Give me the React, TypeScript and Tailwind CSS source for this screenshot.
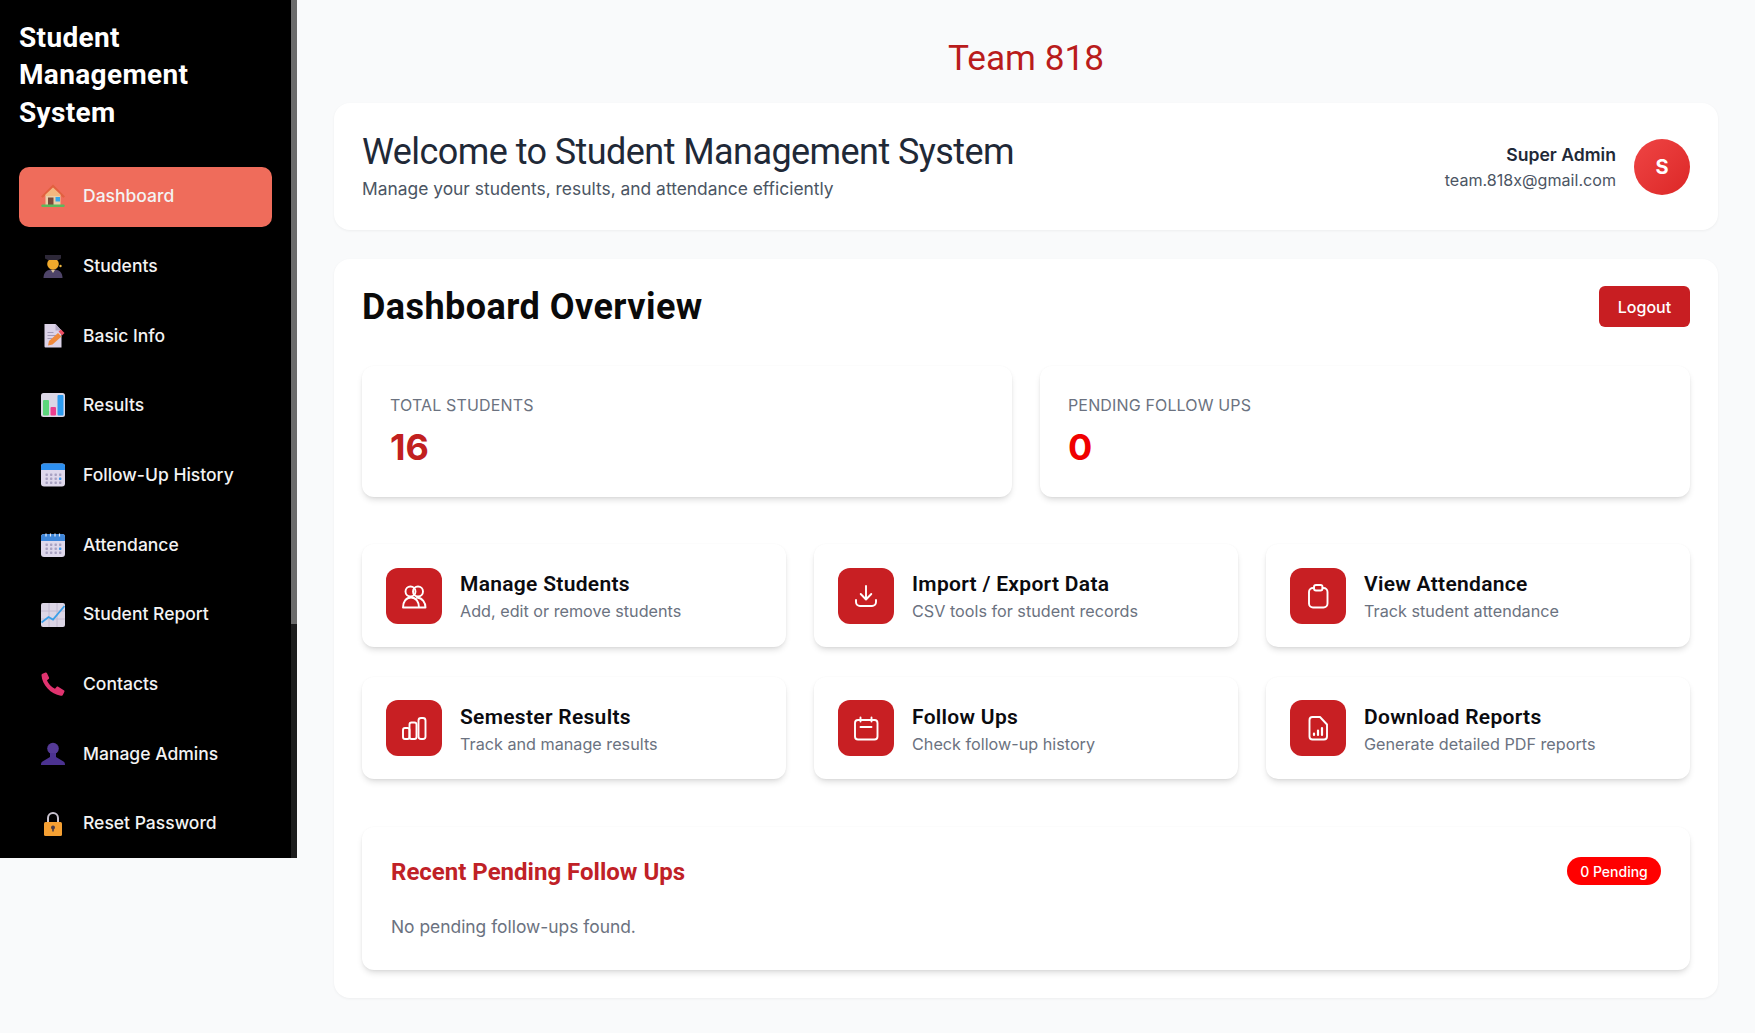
import React from "react";

const heading = "font-['Roboto',sans-serif]";

function DotGrid() {
  const cells: React.ReactNode[] = [];
  [10.5, 14.5, 18.5].forEach((y, r) =>
    [4.5, 9, 13.5, 18].forEach((x, c) =>
      cells.push(<rect key={`${r}-${c}`} x={x} y={y} width="2.400" height="2.400" rx="0.600" fill={r === 1 && c === 3 ? "#3b9bf0" : "#a9a2c2"} />)
    )
  );
  return <>{cells}</>;
}

const emoji: Record<string, React.ReactNode> = {
  house: (
    <>
      <path d="M4.500 10.500h15V21h-15z" fill="#e9cfa8" />
      <path d="M0 12.500 12 .5l12 12-1.800 1.300L12 4 1.800 13.800z" fill="#e2603f" />
      <path d="M12 3.500 4.500 10.500v1.500h15v-1.500z" fill="#f2b880" />
      <path d="M7 13.500h5.500V21.500H7z" fill="#7a4a3a" />
      <path d="M14.500 13h4.500v4.500h-4.500z" fill="#35a6e8" />
      <path d="M1.500 20.500h21a1.200 1.200 0 0 1 0 2.400h-21a1.200 1.200 0 0 1 0-2.400z" fill="#5cb85c" />
    </>
  ),
  student: (
    <>
      <path d="M2.500 24c0-6 3.500-8.500 9.500-8.500s9.500 2.500 9.500 8.500z" fill="#4e4468" />
      <circle cx="12" cy="10" r="5.800" fill="#f0a92c" />
      <path d="M10 16h4l-2 3z" fill="#d9c4a0" />
      <path d="M4 1h16v3.500l-3 1.500H7L4 4.500z" fill="#2d2838" />
      <circle cx="19.500" cy="12" r="1.200" fill="#f0b840" />
    </>
  ),
  memo: (
    <>
      <path d="M3.500 0h11l6 6.500V23.500H4.500a1 1 0 0 1-1-1z" fill="#dcd3e8" />
      <path d="M14.500 0v6.500h6z" fill="#b5abc8" />
      <path d="M6.500 8.500h6M6.500 11.500h9M6.500 14.500h5" stroke="#a49ab8" strokeWidth="1" />
      <path d="m7 21.500 1-4.500 9-8 3.500 3.500-9 8z" fill="#f08a3c" />
      <path d="m17.500 7.500 2.500-2 3.500 3.500-2.500 2.500z" fill="#ee4f63" />
    </>
  ),
  chart: (
    <>
      <rect x="0" y="0" width="24" height="24" rx="2.500" fill="#dcd7e6" />
      <rect x="2" y="7" width="6" height="15.500" rx="1" fill="#5dd67c" />
      <rect x="9.500" y="14" width="5.500" height="8.500" rx="1" fill="#ec3f8e" />
      <rect x="16.500" y="2" width="6" height="20.500" rx="1" fill="#2d9cf0" />
    </>
  ),
  calendar: (
    <>
      <rect x="0" y="0.500" width="24" height="23" rx="3" fill="#dfd9ec" />
      <path d="M0 7V3.500a3 3 0 0 1 3-3h18a3 3 0 0 1 3 3V7z" fill="#2d8ff0" />
      <DotGrid />
    </>
  ),
  spiral: (
    <>
      <rect x="0" y="1" width="24" height="23" rx="3" fill="#dfd9ec" />
      <path d="M0 8V4a3 3 0 0 1 3-3h18a3 3 0 0 1 3 3v4z" fill="#3f87da" />
      <path d="M5 .5v3M9.500 .5v3M14 .5v3M18.500 .5v3" stroke="#e8eefc" strokeWidth="1.200" />
      <DotGrid />
    </>
  ),
  trend: (
    <>
      <rect x="0" y="0" width="24" height="24" rx="2" fill="#dcd6e6" />
      <path d="M8 0v24M16 0v24M0 8h24M0 16h24" stroke="#bdb5cc" strokeWidth="0.800" />
      <path d="m.5 19.500 7-5.500 4.500 2.500L23.500 3" fill="none" stroke="#3a9fe8" strokeWidth="1.800" />
    </>
  ),
  phone: (
    <path d="M1.500 1.800 4.500.500c.7-.3 1.200.1 1.500.7l2 4.300c.3.600.1 1.200-.4 1.600L6 8.300c1.200 3.400 4.600 7 8 8.400l1.500-1.700c.5-.5 1.100-.6 1.700-.3l5.600 3.500c.7.4.9 1.100.5 1.700l-1.500 3c-.4.700-1.100 1-2 .9C10 22.300 1 13 .5 3.300c0-.7.300-1.200 1-1.500z" fill="#e0336f" />
  ),
  bust: (
    <>
      <circle cx="12" cy="6.500" r="5.800" fill="#553a97" />
      <path d="M9 11h6v4l7.500 4.500c1 .6 1.500 1.500 1.500 3.500H0c0-2 .5-2.900 1.500-3.500L9 15z" fill="#4b3290" />
    </>
  ),
  lock: (
    <>
      <path d="M7 11V6a5 5 0 0 1 10 0V11" fill="none" stroke="#c9c3cf" strokeWidth="2" />
      <rect x="3" y="10" width="18" height="14" rx="1.500" fill="#f5a033" />
      <circle cx="12" cy="15.500" r="2" fill="#4a3a48" />
      <path d="M11.200 16h1.600v3.500h-1.600z" fill="#4a3a48" />
    </>
  ),
};

const nav = [
  ["Dashboard", "house"],
  ["Students", "student"],
  ["Basic Info", "memo"],
  ["Results", "chart"],
  ["Follow-Up History", "calendar"],
  ["Attendance", "spiral"],
  ["Student Report", "trend"],
  ["Contacts", "phone"],
  ["Manage Admins", "bust"],
  ["Reset Password", "lock"],
];

const actionIcons: Record<string, React.ReactNode> = {
  students: (
    <>
      <circle cx="24.500" cy="23.500" r="5" />
      <circle cx="32" cy="23.500" r="5" />
      <path d="M17 39.500c0-5.500 3-10 8-10s8 4.500 8 10zM33 39.500h6.500c0-5-3-9.500-8.500-10" />
    </>
  ),
  import: (
    <>
      <path d="M28 18v13M22.700 26l5.300 5.500 5.300-5.500" />
      <path d="M18 32v2a4 4 0 0 0 4 4h12a4 4 0 0 0 4-4v-2" />
    </>
  ),
  attendance: (
    <>
      <path d="M24 20h-1a4 4 0 0 0-4 4v11.500a4 4 0 0 0 4 4h10.500a4 4 0 0 0 4-4V24a4 4 0 0 0-4-4h-1" />
      <rect x="24" y="17" width="8.500" height="5.500" rx="2" />
    </>
  ),
  results: (
    <>
      <rect x="17" y="28" width="6.500" height="11" rx="2" />
      <rect x="23.500" y="22.500" width="7" height="16.500" rx="2" />
      <rect x="32.500" y="18" width="7" height="21" rx="2.500" />
    </>
  ),
  follow: (
    <>
      <rect x="17" y="20" width="22.500" height="19.500" rx="3" />
      <path d="M22.500 17.500v4M33.500 17.500v4M22.500 27h11" />
    </>
  ),
  reports: (
    <>
      <path d="M22.500 17H30l7 7.500V36.500a3 3 0 0 1-3 3H22.500a3 3 0 0 1-3-3V20a3 3 0 0 1 3-3z" />
      <path d="M24 33.500V35M28 30.500V35M32 28V35" strokeWidth="2.200" />
    </>
  ),
};

const row1 = [
  ["Manage Students", "Add, edit or remove students", "students"],
  ["Import / Export Data", "CSV tools for student records", "import"],
  ["View Attendance", "Track student attendance", "attendance"],
];
const row2 = [
  ["Semester Results", "Track and manage results", "results"],
  ["Follow Ups", "Check follow-up history", "follow"],
  ["Download Reports", "Generate detailed PDF reports", "reports"],
];

function ActionCard({ title, sub, icon, h }: { title: string; sub: string; icon: string; h: string }) {
  return (
    <div className={`flex items-center gap-[18px] rounded-xl bg-white pl-6 shadow-[0_4px_6px_-1px_rgba(0,0,0,0.12),0_2px_4px_-2px_rgba(0,0,0,0.08),0_0_2px_rgba(0,0,0,0.03)] ${h}`}>
      <div className="h-14 w-14 shrink-0 rounded-xl bg-[#c81f23]">
        <svg width="56" height="56" viewBox="0 0 56 56" fill="none" stroke="white" strokeWidth="1.900" strokeLinecap="round" strokeLinejoin="round">
          {actionIcons[icon]}
        </svg>
      </div>
      <div className="pt-[3px]">
        <div className={`${heading} text-[21px] leading-[28px] font-semibold tracking-[0.3px] text-[#0b0b0f]`}>{title}</div>
        <div className="text-[16.2px] leading-[26px] text-[#6b7280]">{sub}</div>
      </div>
    </div>
  );
}

export default function App() {
  return (
    <div className="flex min-h-[1033px] items-start bg-[#f9fafb] font-['Inter',sans-serif]">
      <aside className="flex h-[858px] w-[297px] shrink-0 bg-black text-white">
        <div className="w-[291px] shrink-0 pl-[19px]">
          <div className={`${heading} mt-[19px] mb-[36px] w-[220px] text-[28px] leading-[37.300px] font-bold tracking-[0.35px] text-white`}>
            Student Management System
          </div>
          <div className="flex w-[253px] flex-col gap-[9.7px]">
            {nav.map(([label, icon], i) => (
              <div
                key={label}
                className={`flex h-[60px] items-center gap-[18px] rounded-[10px] pb-[1px] pl-[22px] text-[17.5px] font-medium text-[#f3f3f3] ${i === 0 ? "bg-[#ef6c5b]" : ""}`}
              >
                <svg width="24" height="24" viewBox="0 0 24 24" className="shrink-0">
                  {emoji[icon]}
                </svg>
                <span>{label}</span>
              </div>
            ))}
          </div>
        </div>
        <div className="flex-1 bg-[#1c1c1c]">
          <div className="h-[624px] bg-[#6b6b6b]" />
        </div>
      </aside>

      <main className="min-w-0 flex-1 pr-[37px] pl-[37px]">
        <h1 className={`${heading} mt-[38px] mb-[25px] text-center text-[35.200px] leading-[40px] font-normal text-[#b91c1c]`}>Team 818</h1>

        <section className="mb-[29px] flex h-[127px] items-center justify-between rounded-2xl bg-white pr-[28px] pl-7 shadow-[0_1px_3px_rgba(0,0,0,0.05)]">
          <div>
            <div className={`${heading} -mt-[1px] text-[36px] leading-[44px] font-normal tracking-[-0.57px] text-[#1f2937]`}>Welcome to Student Management System</div>
            <div className="pt-[1px] text-[17.4px] leading-[28px] text-[#4b5563]">Manage your students, results, and attendance efficiently</div>
          </div>
          <div className="flex items-center gap-[18px]">
            <div className="text-right">
              <div className="text-[17.6px] leading-[26px] font-semibold text-[#1f2937]">Super Admin</div>
              <div className="text-[16.100px] leading-[24px] text-[#4b5563]">team.818x@gmail.com</div>
            </div>
            <div className="flex h-14 w-14 items-center justify-center rounded-full bg-gradient-to-br from-[#ef4444] to-[#dc2626] text-[20px] font-bold text-white">S</div>
          </div>
        </section>

        <section className="mb-[35px] rounded-2xl bg-white px-7 pt-[27px] pb-7 shadow-[0_1px_3px_rgba(0,0,0,0.05)]">
          <div className="mb-[39px] flex h-[41px] items-center justify-between">
            <div className={`${heading} pt-[1px] text-[36px] leading-[40px] font-bold tracking-[0.45px] text-[#0a0a0a]`}>Dashboard Overview</div>
            <button className="h-[41px] w-[91px] rounded-md bg-[#c81e22] text-[16px] font-medium text-white">Logout</button>
          </div>

          <div className="mb-[47px] grid grid-cols-2 gap-7">
            {[
              ["TOTAL STUDENTS", "16", "text-[#c1201f]"],
              ["PENDING FOLLOW UPS", "0", "text-[#f00000]"],
            ].map(([label, value, color]) => (
              <div key={label} className="h-[131px] rounded-xl bg-white px-7 pt-[27px] shadow-[0_4px_6px_-1px_rgba(0,0,0,0.12),0_2px_4px_-2px_rgba(0,0,0,0.08),0_0_2px_rgba(0,0,0,0.03)]">
                <div className="text-[16px] leading-[24px] tracking-[0.15px] text-[#6b7280]">{label}</div>
                <div className={`mt-[10px] text-[36px] leading-[40px] font-bold ${color}`}>{value}</div>
              </div>
            ))}
          </div>

          <div className="mb-[30px] grid grid-cols-3 gap-7">
            {row1.map(([t, s, i]) => (
              <ActionCard key={t} title={t} sub={s} icon={i} h="h-[103px]" />
            ))}
          </div>
          <div className="mb-[48px] grid grid-cols-3 gap-7">
            {row2.map(([t, s, i]) => (
              <ActionCard key={t} title={t} sub={s} icon={i} h="h-[102px]" />
            ))}
          </div>

          <div className="h-[143px] rounded-xl bg-white pt-[30px] pr-[29px] pl-[29px] shadow-[0_4px_6px_-1px_rgba(0,0,0,0.12),0_2px_4px_-2px_rgba(0,0,0,0.08),0_0_2px_rgba(0,0,0,0.03)]">
            <div className="flex h-[28px] items-center justify-between">
              <div className={`${heading} pt-[2px] text-[24px] leading-[30px] font-bold text-[#c02126]`}>Recent Pending Follow Ups</div>
              <div className="flex h-[28px] w-[94px] items-center justify-center rounded-full bg-[#ff0000] text-[14px] font-medium text-white">0 Pending</div>
            </div>
            <div className="mt-[29px] text-[17.4px] leading-[26px] text-[#6b7280]">No pending follow-ups found.</div>
          </div>
        </section>
      </main>
    </div>
  );
}
